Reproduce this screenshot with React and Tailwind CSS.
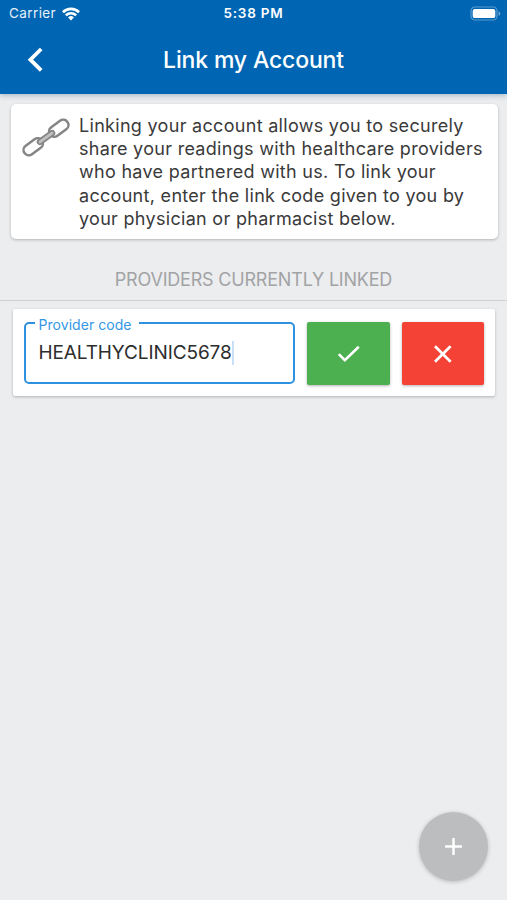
import { Plus } from 'lucide-react';

const INTRO_LINES = [
  'Linking your account allows you to securely',
  'share your readings with healthcare providers',
  'who have partnered with us. To link your',
  'account, enter the link code given to you by',
  'your physician or pharmacist below.',
];

function WifiIcon() {
  return (
    <svg className="ml-[6px] h-[14px] w-[18px]" viewBox="0 0 19 14" fill="none" stroke="white" strokeWidth="2.8">
      <path d="M1 5.1a12.2 12.2 0 0 1 17 0" />
      <path d="M4.1 8.4a7.7 7.7 0 0 1 10.8 0" />
      <path d="M9.5 13.8 6.4 10.7a4.4 4.4 0 0 1 6.2 0Z" fill="white" stroke="none" />
    </svg>
  );
}

function BatteryIcon() {
  return (
    <svg className="h-[15px] w-[31px]" viewBox="0 0 31 15" fill="none">
      <rect x="1" y="1" width="26" height="13" rx="4" stroke="white" strokeOpacity="0.35" strokeWidth="1.2" />
      <rect x="2.7" y="2.9" width="22.6" height="9.2" rx="2.2" fill="white" />
      <path d="M28.6 5.2v4.6c1.1-.4 1.7-1.3 1.7-2.3s-.6-1.9-1.7-2.3Z" fill="white" fillOpacity="0.45" />
    </svg>
  );
}

function ChainIcon() {
  return (
    <svg className="h-[40px] w-[50px] shrink-0" viewBox="0 0 50 40" fill="none">
      <g transform="rotate(-36 25 20.5)" stroke="#858585" strokeWidth="2.5">
        <rect x="-1.5" y="15.2" width="21.500" height="10.600" rx="5.300" />
        <rect x="30" y="15.2" width="21.500" height="10.600" rx="5.300" />
        <rect x="15.200" y="18.200" width="19.600" height="4.600" rx="2.300" fill="#c0c0c0" strokeWidth="1.800" />
      </g>
    </svg>
  );
}

function StatusBar() {
  return (
    <div className="grid h-[27px] grid-cols-3 items-center text-[13.5px] leading-none">
      <div className="flex items-center pl-[9px]">
        <span className="tracking-[0.4px] opacity-90">Carrier</span>
        <WifiIcon />
      </div>
      <span className="pt-px text-center text-[13.5px] font-semibold tracking-[0.75px] whitespace-nowrap">5:38 PM</span>
      <div className="flex justify-end pr-[6px]">
        <BatteryIcon />
      </div>
    </div>
  );
}

function Header() {
  return (
    <header className="relative h-[94px] bg-[#0066b3] text-white shadow-[0_1px_6px_rgba(0,70,110,0.35)]">
      <StatusBar />
      <div className="grid h-[66px] grid-cols-[60px_1fr_60px] items-center">
        <button type="button" aria-label="Back" className="pl-[27px]">
          <svg className="h-[26px] w-[17px]" viewBox="0 0 17 26" fill="none" stroke="white" strokeWidth="3.8">
            <path d="M14.2 2 3.400 12.700 14.200 23.400" />
          </svg>
        </button>
        <h1 className="text-center text-[23px] font-medium tracking-[-0.15px] whitespace-nowrap">Link my Account</h1>
      </div>
    </header>
  );
}

export default function App() {
  return (
    <div className="flex h-[900px] w-[507px] flex-col overflow-hidden bg-[#ecedef] font-['Inter',sans-serif]">
      <Header />

      <section className="ml-[10.5px] mr-[9.5px] mt-[10px] flex h-[135px] rounded-[5px] bg-white pt-[10px] pl-[10px] shadow-[0_1px_3px_rgba(0,0,0,0.25)]">
        <div className="pt-[3px]">
          <ChainIcon />
        </div>
        <p className="ml-[8.5px] text-[18px] leading-[23.2px] tracking-[0.3px] whitespace-nowrap text-[#3a3a3a]">
          {INTRO_LINES.map((line) => (
            <span key={line} className="block">{line}</span>
          ))}
        </p>
      </section>

      <h2 className="mt-[20px] flex h-[42px] items-center justify-center border-b border-[#cfd0d2] text-[18px] tracking-[-0.2px] text-[#a2a3a5]">
        PROVIDERS CURRENTLY LINKED
      </h2>

      <section className="mr-[12px] ml-[13px] mt-[8px] flex h-[87px] gap-[12px] rounded-[2px] bg-white pt-[13px] pl-[11px] shadow-[0_1px_3px_rgba(0,0,0,0.25)]">
        <div className="relative flex h-[62px] w-[271px] items-center rounded-[5px] border-2 border-[#2f92e0] pl-[12.5px]">
          <span className="absolute -top-[7px] left-[8.500px] bg-white pr-[7px] pl-[4px] text-[14px] leading-[16px] tracking-[0.05px] whitespace-nowrap text-[#3597e4]">
            Provider code
          </span>
          <span className="text-[19px] leading-[24px] tracking-[-0.1px] text-[#2d2d2d]">HEALTHYCLINIC5678</span>
          <span className="h-[24px] w-[2px] bg-[#c9e0f7]" />
        </div>
        <button
          type="button"
          aria-label="Confirm"
          className="flex h-[63px] w-[83px] items-center justify-center rounded-[2px] bg-[#4caf50] shadow-[0_1px_3px_rgba(0,0,0,0.3)]"
        >
          <svg className="h-[20px] w-[24px]" viewBox="0 0 24 20" fill="none" stroke="white" strokeWidth="2.6">
            <path d="m1.800 10.200 6 6L21.800 2.800" />
          </svg>
        </button>
        <button
          type="button"
          aria-label="Cancel"
          className="flex h-[63px] w-[82px] items-center justify-center rounded-[2px] bg-[#f44336] shadow-[0_1px_3px_rgba(0,0,0,0.3)]"
        >
          <svg className="h-[20px] w-[20px]" viewBox="0 0 20 20" fill="none" stroke="white" strokeWidth="2.700">
            <path d="m2 2.200 15.600 15.600M17.600 2.200 2 17.800" />
          </svg>
        </button>
      </section>

      <button
        type="button"
        aria-label="Add provider"
        className="mt-auto mr-[19px] mb-[19px] flex size-[69px] items-center justify-center self-end rounded-full bg-[#bcbdbf] text-white shadow-[0_1px_4px_rgba(0,0,0,0.22)]"
      >
        <Plus size={29} strokeWidth={2} strokeLinecap="butt" />
      </button>
    </div>
  );
}
